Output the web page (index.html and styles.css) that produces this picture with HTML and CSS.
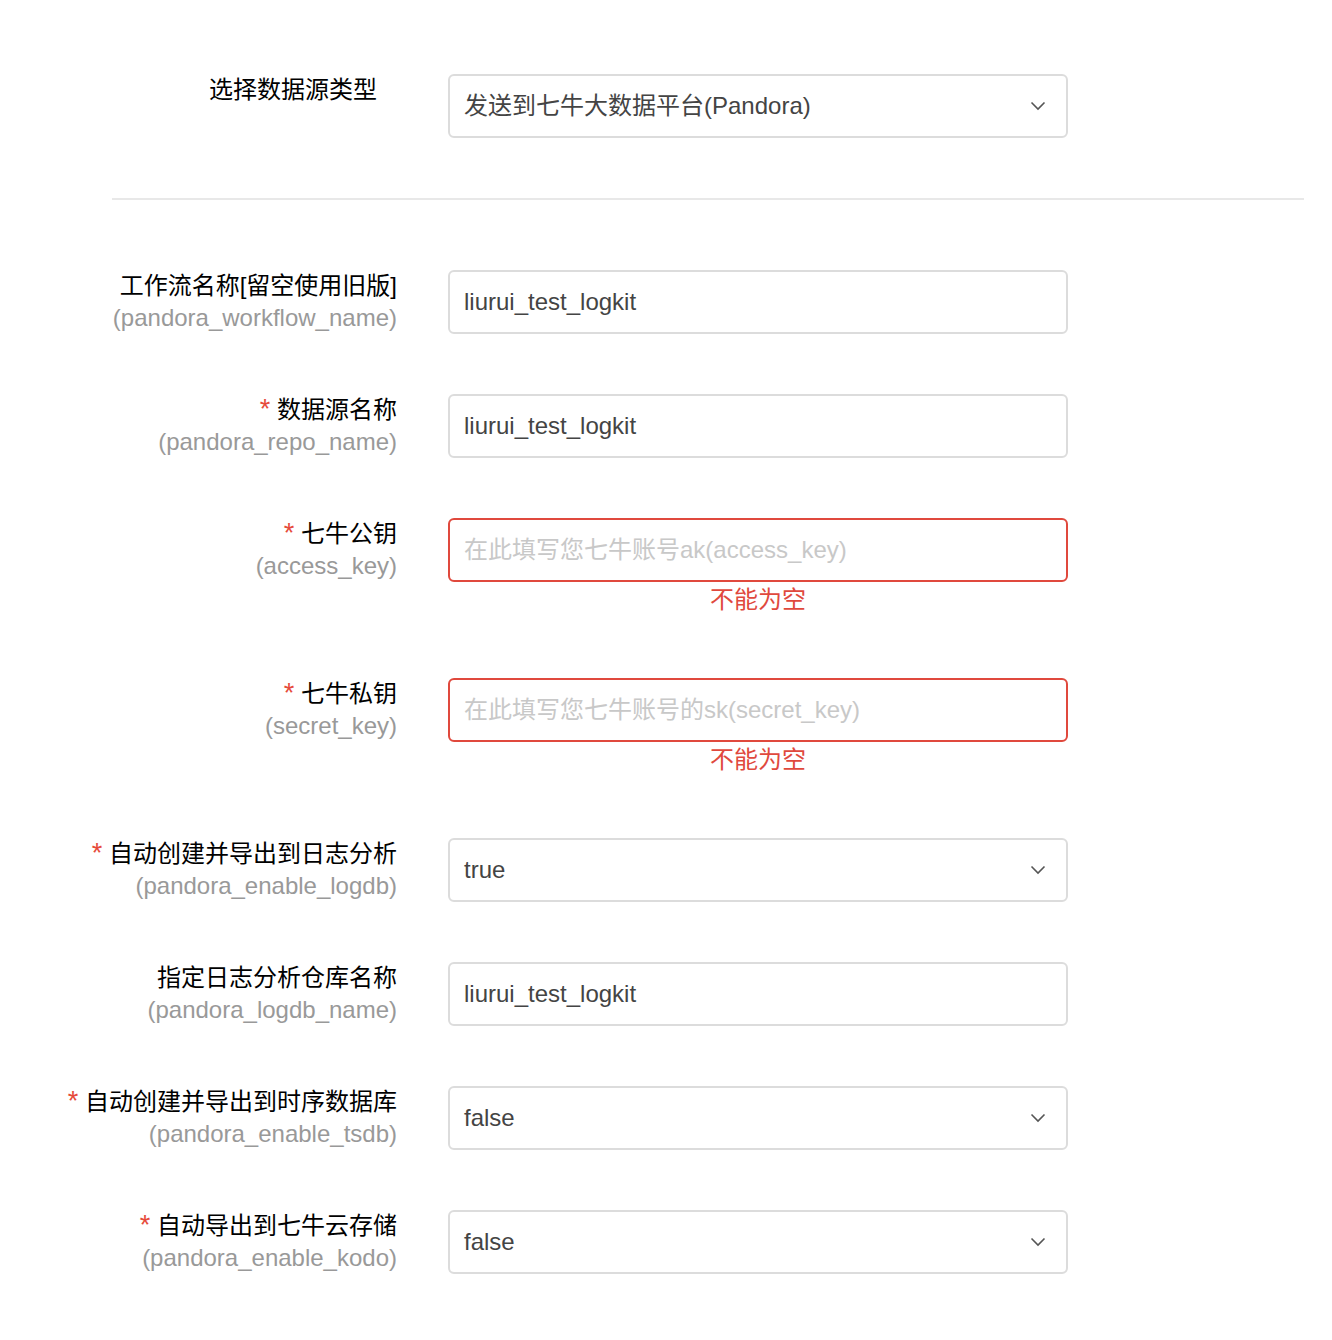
FILE: index.html
```html
<!DOCTYPE html>
<html lang="zh-CN">
<head>
<meta charset="utf-8">
<title>Pandora</title>
<link rel="stylesheet" href="styles.css">
</head>
<body>
<div class="page">
  <div class="type-row">
    <div class="type-label">选择数据源类型</div>
    <div class="control select"><span class="value cjk">发送到七牛大数据平台(Pandora)</span><svg class="chev" width="16" height="10" viewBox="0 0 16 10"><path d="M1.5 1.5 L8 8 L14.5 1.5" fill="none" stroke="#555" stroke-width="1.6"/></svg></div>
  </div>
  <div class="divider"></div>

  <div class="form">
    <div class="row">
      <div class="label"><div class="main">工作流名称[留空使用旧版]</div><div class="sub">(pandora_workflow_name)</div></div>
      <div class="field"><div class="control"><span class="value">liurui_test_logkit</span></div></div>
    </div>
    <div class="row">
      <div class="label"><div class="main"><span class="req">*</span> 数据源名称</div><div class="sub">(pandora_repo_name)</div></div>
      <div class="field"><div class="control"><span class="value">liurui_test_logkit</span></div></div>
    </div>
    <div class="row">
      <div class="label"><div class="main"><span class="req">*</span> 七牛公钥</div><div class="sub">(access_key)</div></div>
      <div class="field"><div class="control error"><span class="placeholder cjk">在此填写您七牛账号ak(access_key)</span></div><div class="err-msg">不能为空</div></div>
    </div>
    <div class="row">
      <div class="label"><div class="main"><span class="req">*</span> 七牛私钥</div><div class="sub">(secret_key)</div></div>
      <div class="field"><div class="control error"><span class="placeholder cjk">在此填写您七牛账号的sk(secret_key)</span></div><div class="err-msg">不能为空</div></div>
    </div>
    <div class="row">
      <div class="label"><div class="main"><span class="req">*</span> 自动创建并导出到日志分析</div><div class="sub">(pandora_enable_logdb)</div></div>
      <div class="field"><div class="control select"><span class="value">true</span><svg class="chev" width="16" height="10" viewBox="0 0 16 10"><path d="M1.5 1.5 L8 8 L14.5 1.5" fill="none" stroke="#555" stroke-width="1.6"/></svg></div></div>
    </div>
    <div class="row">
      <div class="label"><div class="main">指定日志分析仓库名称</div><div class="sub">(pandora_logdb_name)</div></div>
      <div class="field"><div class="control"><span class="value">liurui_test_logkit</span></div></div>
    </div>
    <div class="row">
      <div class="label"><div class="main"><span class="req">*</span> 自动创建并导出到时序数据库</div><div class="sub">(pandora_enable_tsdb)</div></div>
      <div class="field"><div class="control select"><span class="value">false</span><svg class="chev" width="16" height="10" viewBox="0 0 16 10"><path d="M1.5 1.5 L8 8 L14.5 1.5" fill="none" stroke="#555" stroke-width="1.6"/></svg></div></div>
    </div>
    <div class="row">
      <div class="label"><div class="main"><span class="req">*</span> 自动导出到七牛云存储</div><div class="sub">(pandora_enable_kodo)</div></div>
      <div class="field"><div class="control select"><span class="value">false</span><svg class="chev" width="16" height="10" viewBox="0 0 16 10"><path d="M1.5 1.5 L8 8 L14.5 1.5" fill="none" stroke="#555" stroke-width="1.6"/></svg></div></div>
    </div>
  </div>
</div>
</body>
</html>
```
FILE: styles.css
```css
html, body {
  margin: 0;
  padding: 0;
  background: #fff;
}
body {
  font-family: "Liberation Sans", "Noto Sans CJK SC", sans-serif;
  font-size: 24px;
  color: #1a1a1a;
}
.page {
  padding-top: 74px;
  width: 1332px;
}
.type-row {
  display: flex;
  align-items: flex-start;
}
.type-label {
  width: 377px;
  text-align: right;
  line-height: 32px;
  margin-right: 71px;
  color: #000;
}
.divider {
  margin: 60px 0 0 112px;
  width: 1192px;
  height: 2px;
  background: #e8e8e8;
}
.form {
  padding-top: 70px;
}
.row {
  display: flex;
  align-items: flex-start;
  margin-bottom: 60px;
}
.label {
  width: 397px;
  text-align: right;
  line-height: 32px;
  margin-right: 51px;
}
.label .main {
  color: #000;
  white-space: nowrap;
  height: 32px;
}
.label .sub {
  color: #999;
  white-space: nowrap;
  height: 32px;
}
.req {
  color: #e64a3b;
  font-size: 27px;
  line-height: 0;
}
.field {
  width: 620px;
}
.control {
  box-sizing: border-box;
  width: 620px;
  height: 64px;
  border: 2px solid #dcdcdc;
  border-radius: 6px;
  display: flex;
  align-items: center;
  padding: 0 14px;
  background: #fff;
}
.control.error {
  border-color: #e0493d;
}
.value {
  color: #444;
  flex: 1;
}
.placeholder {
  color: #c8c8c8;
  flex: 1;
}
.cjk {
  padding-bottom: 6px;
}
.chev {
  margin-right: 6px;
}
.err-msg {
  text-align: center;
  color: #e0493d;
  line-height: 36px;
  height: 36px;
}
```
